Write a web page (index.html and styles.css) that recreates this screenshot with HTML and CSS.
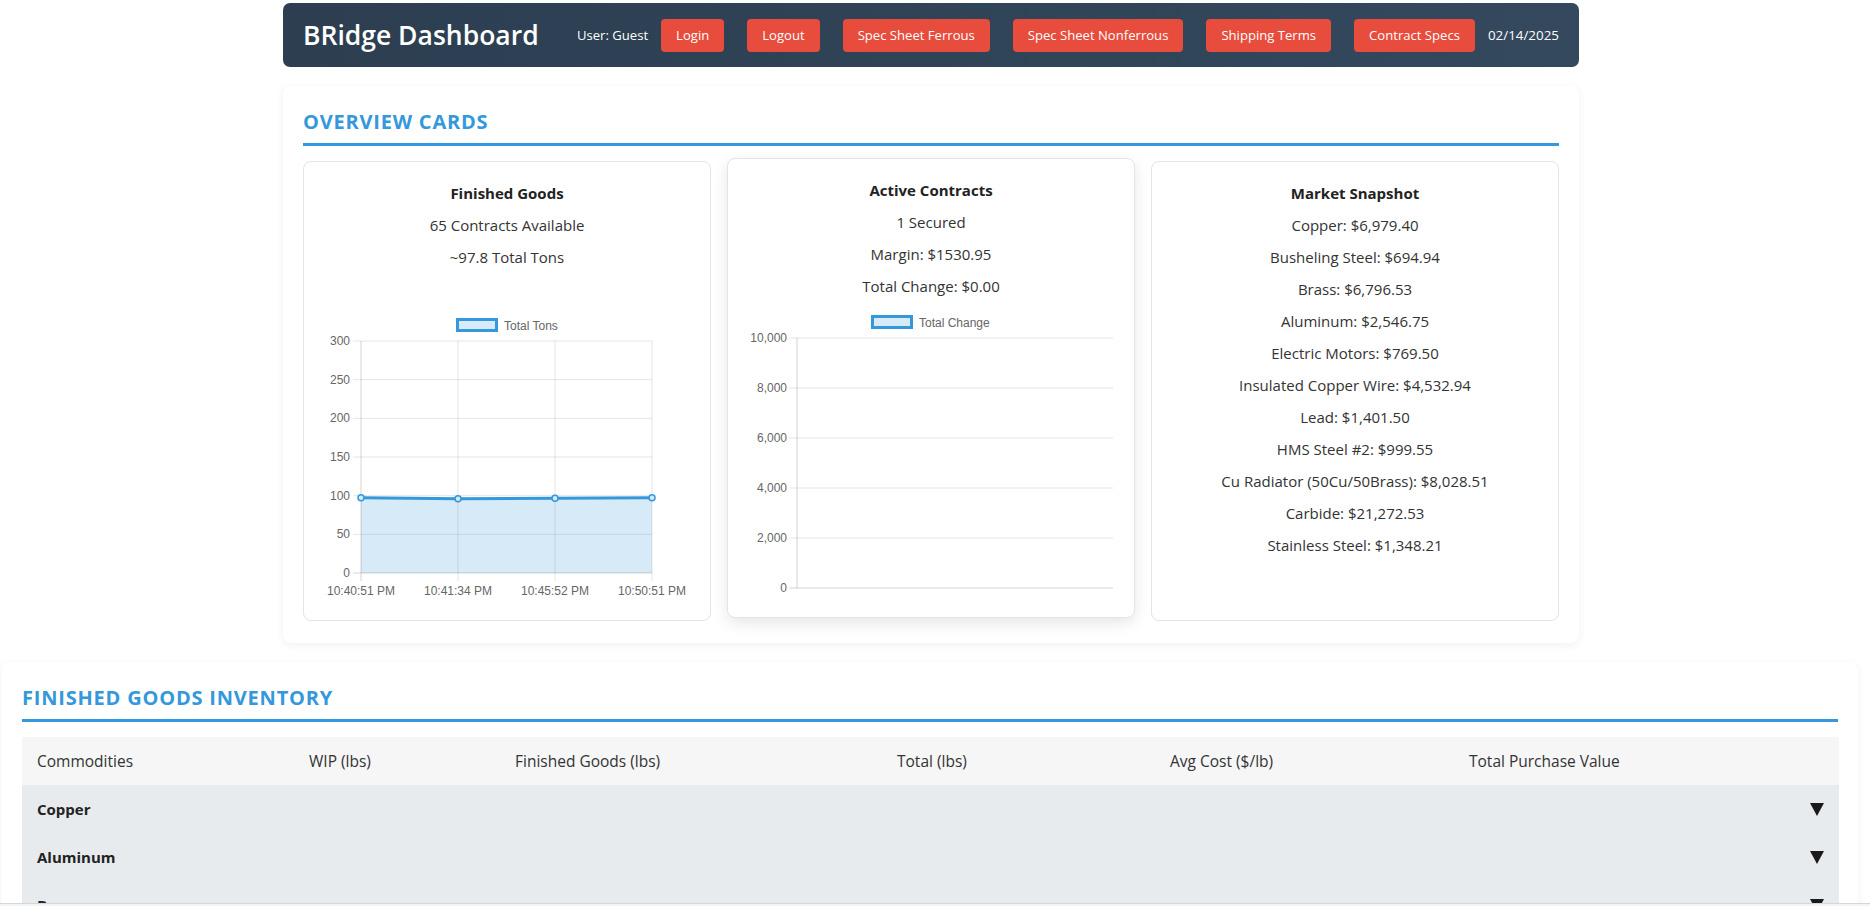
FILE: index.html
```html
<!DOCTYPE html>
<html lang="en">
<head>
<meta charset="utf-8">
<title>BRidge Dashboard</title>
<link rel="stylesheet" href="styles.css">
</head>
<body>
<div class="page">
  <header class="topbar">
    <h1 class="brand">BRidge Dashboard</h1>
    <nav class="nav">
      <span class="nav-text">User: Guest</span>
      <button class="btn">Login</button>
      <button class="btn">Logout</button>
      <button class="btn">Spec Sheet Ferrous</button>
      <button class="btn">Spec Sheet Nonferrous</button>
      <button class="btn">Shipping Terms</button>
      <button class="btn">Contract Specs</button>
      <span class="nav-text nav-date">02/14/2025</span>
    </nav>
  </header>

  <section class="panel overview">
    <h2 class="section-title">Overview Cards</h2>
    <div class="cards">
      <div class="card">
        <h3 class="card-title">Finished Goods</h3>
        <p class="card-line">65 Contracts Available</p>
        <p class="card-line">~97.8 Total Tons</p>
        <div class="chart-wrap">
        <svg class="chart" viewBox="0 0 366 291" width="366" height="291">
          <rect x="133.5" y="10.5" width="39" height="11" class="legend-box"/>
          <text x="180" y="20.5" class="chart-text">Total Tons</text>
          <g class="grid">
            <line x1="29" y1="32" x2="328" y2="32"/>
            <line x1="29" y1="70.67" x2="328" y2="70.67"/>
            <line x1="29" y1="109.33" x2="328" y2="109.33"/>
            <line x1="29" y1="148" x2="328" y2="148"/>
            <line x1="29" y1="186.67" x2="328" y2="186.67"/>
            <line x1="29" y1="225.33" x2="328" y2="225.33"/>
            <line x1="134" y1="32" x2="134" y2="272"/>
            <line x1="231" y1="32" x2="231" y2="272"/>
            <line x1="328" y1="32" x2="328" y2="272"/>
          </g>
          <polygon class="area" points="37,188.7 134,189.7 231,189.3 328,188.7 328,264 37,264"/>
          <g class="axis">
            <line x1="29" y1="264" x2="328" y2="264"/>
            <line x1="37" y1="32" x2="37" y2="272"/>
          </g>
          <polyline class="series" points="37,188.7 134,189.7 231,189.3 328,188.7"/>
          <g class="dots">
            <circle cx="37" cy="188.7" r="3"/>
            <circle cx="134" cy="189.7" r="3"/>
            <circle cx="231" cy="189.3" r="3"/>
            <circle cx="328" cy="188.7" r="3"/>
          </g>
          <g class="chart-text y-labels">
            <text x="26" y="36">300</text>
            <text x="26" y="74.67">250</text>
            <text x="26" y="113.33">200</text>
            <text x="26" y="152">150</text>
            <text x="26" y="190.67">100</text>
            <text x="26" y="229.33">50</text>
            <text x="26" y="268">0</text>
          </g>
          <g class="chart-text x-labels">
            <text x="37" y="286">10:40:51 PM</text>
            <text x="134" y="286">10:41:34 PM</text>
            <text x="231" y="286">10:45:52 PM</text>
            <text x="328" y="286">10:50:51 PM</text>
          </g>
        </svg>
        </div>
      </div>

      <div class="card is-raised">
        <h3 class="card-title">Active Contracts</h3>
        <p class="card-line">1 Secured</p>
        <p class="card-line">Margin: $1530.95</p>
        <p class="card-line">Total Change: $0.00</p>
        <div class="chart-wrap">
        <svg class="chart" viewBox="0 0 366 291" width="366" height="291">
          <rect x="124.5" y="10.5" width="39" height="11" class="legend-box"/>
          <text x="171" y="20.5" class="chart-text">Total Change</text>
          <g class="grid">
            <line x1="41" y1="32" x2="365" y2="32"/>
            <line x1="41" y1="82" x2="365" y2="82"/>
            <line x1="41" y1="132" x2="365" y2="132"/>
            <line x1="41" y1="182" x2="365" y2="182"/>
            <line x1="41" y1="232" x2="365" y2="232"/>
          </g>
          <g class="axis">
            <line x1="41" y1="282" x2="365" y2="282"/>
            <line x1="49" y1="32" x2="49" y2="282"/>
          </g>
          <g class="chart-text y-labels">
            <text x="39" y="36">10,000</text>
            <text x="39" y="86">8,000</text>
            <text x="39" y="136">6,000</text>
            <text x="39" y="186">4,000</text>
            <text x="39" y="236">2,000</text>
            <text x="39" y="286">0</text>
          </g>
        </svg>
        </div>
      </div>

      <div class="card">
        <h3 class="card-title">Market Snapshot</h3>
        <p class="card-line">Copper: $6,979.40</p>
        <p class="card-line">Busheling Steel: $694.94</p>
        <p class="card-line">Brass: $6,796.53</p>
        <p class="card-line">Aluminum: $2,546.75</p>
        <p class="card-line">Electric Motors: $769.50</p>
        <p class="card-line">Insulated Copper Wire: $4,532.94</p>
        <p class="card-line">Lead: $1,401.50</p>
        <p class="card-line">HMS Steel #2: $999.55</p>
        <p class="card-line">Cu Radiator (50Cu/50Brass): $8,028.51</p>
        <p class="card-line">Carbide: $21,272.53</p>
        <p class="card-line">Stainless Steel: $1,348.21</p>
      </div>
    </div>
  </section>

  <section class="panel inventory">
    <h2 class="section-title">Finished Goods Inventory</h2>
    <table class="inv-table">
      <colgroup>
        <col class="col-a"><col class="col-b"><col class="col-c"><col class="col-d"><col class="col-e"><col class="col-f">
      </colgroup>
      <thead>
        <tr>
          <th>Commodities</th>
          <th>WIP (lbs)</th>
          <th>Finished Goods (lbs)</th>
          <th>Total (lbs)</th>
          <th>Avg Cost ($/lb)</th>
          <th>Total Purchase Value</th>
        </tr>
      </thead>
      <tbody>
        <tr class="group-row"><td colspan="6"><div class="group-head"><span>Copper</span><svg class="caret" viewBox="0 0 14 13" width="14" height="13"><polygon points="0,0 14,0 7,13"/></svg></div></td></tr>
        <tr class="group-row"><td colspan="6"><div class="group-head"><span>Aluminum</span><svg class="caret" viewBox="0 0 14 13" width="14" height="13"><polygon points="0,0 14,0 7,13"/></svg></div></td></tr>
        <tr class="group-row"><td colspan="6"><div class="group-head"><span>Brass</span><svg class="caret" viewBox="0 0 14 13" width="14" height="13"><polygon points="0,0 14,0 7,13"/></svg></div></td></tr>
        <tr class="group-row"><td colspan="6"><div class="group-head"><span>Steel</span><svg class="caret" viewBox="0 0 14 13" width="14" height="13"><polygon points="0,0 14,0 7,13"/></svg></div></td></tr>
      </tbody>
    </table>
  </section>
</div>
<div class="viewport-edge"></div>
</body>
</html>
```

FILE: styles.css
```css
* { box-sizing: border-box; }

html, body {
  margin: 0;
  padding: 0;
  background: #ffffff;
  font-family: "Open Sans", "Noto Sans", sans-serif;
  color: #333333;
}

.page {
  width: 1862px;
  padding-top: 3px;
  padding-bottom: 40px;
}

/* ---------- Top bar ---------- */
.topbar {
  width: 1296px;
  height: 64px;
  margin: 0 auto;
  padding: 0 20px;
  display: flex;
  align-items: center;
  justify-content: space-between;
  background: linear-gradient(90deg, #2c3e50, #34495e);
  border-radius: 7px;
  color: #ffffff;
}

.brand {
  margin: 0;
  font-size: 26.5px;
  font-weight: 600;
  line-height: 32px;
  color: #ffffff;
}

.nav {
  display: flex;
  align-items: center;
  gap: 13px;
}

.nav-text {
  font-size: 13.1px;
  line-height: 17px;
  color: #ffffff;
}

.nav-date { font-size: 13.4px; }

.btn {
  font-family: "Open Sans", "Noto Sans", sans-serif;
  font-size: 13.1px;
  line-height: 17px;
  padding: 8px 15px;
  border: none;
  border-radius: 4px;
  background: #e74c3c;
  color: #ffffff;
  cursor: pointer;
}

.btn + .btn { margin-left: 10px; }

/* ---------- Panels ---------- */
.panel {
  background: #ffffff;
  border-radius: 8px;
  box-shadow: 0 2px 10px rgba(0, 0, 0, 0.06);
}

.overview {
  width: 1296px;
  margin: 19px auto 0;
  padding: 20px 20px 22px;
}

.section-title {
  margin: 4px 0 15px;
  padding-bottom: 9px;
  border-bottom: 3px solid #3498db;
  font-size: 20px;
  line-height: 24px;
  font-weight: 700;
  letter-spacing: 0.8px;
  text-transform: uppercase;
  color: #3498db;
}

/* ---------- Cards ---------- */
.cards {
  display: grid;
  grid-template-columns: repeat(3, 1fr);
  gap: 16px;
}

.card {
  display: flex;
  flex-direction: column;
  align-items: center;
  padding: 19px 20px 20px;
  border: 1px solid #e1e4e8;
  border-radius: 8px;
  background: #ffffff;
  text-align: center;
}

.card.is-raised {
  transform: translateY(-3px);
  box-shadow: 0 5px 15px rgba(0, 0, 0, 0.1);
}

.card-title {
  margin: 0;
  font-size: 15px;
  line-height: 24px;
  font-weight: 700;
  color: #222222;
}

.card-line {
  margin: 8px 0 0;
  font-size: 15px;
  line-height: 24px;
  color: #333333;
}

.chart-wrap {
  margin-top: auto;
  padding-top: 8px;
  flex: none;
}

.chart { display: block; }

.chart-text {
  font-family: "Liberation Sans", Arial, sans-serif;
  font-size: 12px;
  fill: #666666;
}

.y-labels text { text-anchor: end; }
.x-labels text { text-anchor: middle; }

.legend-box {
  fill: rgba(52, 152, 219, 0.2);
  stroke: #3498db;
  stroke-width: 3;
}

.grid line {
  stroke: rgba(0, 0, 0, 0.1);
  stroke-width: 1;
}

.axis line {
  stroke: rgba(0, 0, 0, 0.17);
  stroke-width: 1;
}

.area { fill: rgba(52, 152, 219, 0.2); }

.series {
  fill: none;
  stroke: #3498db;
  stroke-width: 3;
}

.dots circle {
  fill: #d6e9f7;
  stroke: #3498db;
  stroke-width: 1.5;
}

/* ---------- Inventory ---------- */
.inventory {
  margin: 19px 4px 0 2px;
  padding: 20px;
}

.inv-table {
  width: 100%;
  border-collapse: collapse;
  table-layout: fixed;
}

.col-a { width: 272px; }
.col-b { width: 206px; }
.col-c { width: 382px; }
.col-d { width: 273px; }
.col-e { width: 299px; }
.col-f { width: 385px; }

.inv-table th {
  text-align: left;
  padding: 12px 15px;
  font-size: 15.5px;
  line-height: 24px;
  font-weight: 400;
  color: #333333;
  background: #f6f6f7;
}

.group-row td {
  padding: 12px 15px;
  background: #e8ebee;
  font-size: 15px;
  line-height: 24px;
  font-weight: 700;
  color: #222222;
}

.group-head {
  display: flex;
  align-items: center;
  justify-content: space-between;
}

.caret { display: block; fill: #1a1a1a; }

.viewport-edge {
  position: fixed;
  left: 0;
  right: 0;
  bottom: 0;
  height: 3px;
  border-top: 1px solid #d6d6d6;
  background: #f3f3f3;
}
```
